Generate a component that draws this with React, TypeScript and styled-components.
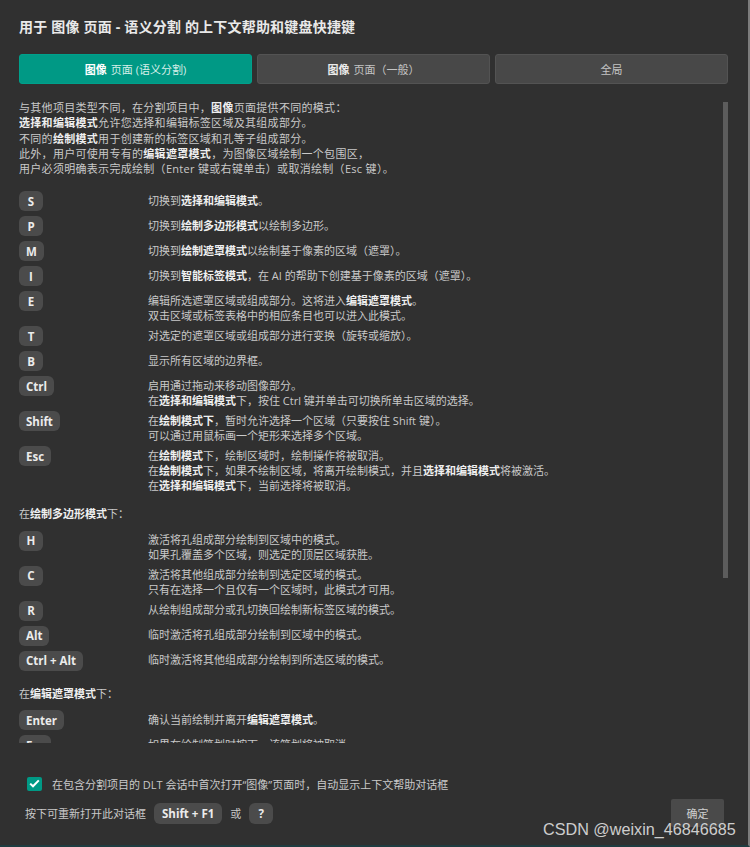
import React from "react";
import styled, { createGlobalStyle } from "styled-components";

const Global = createGlobalStyle`
  html, body { margin: 0; padding: 0; background: #303030; }
  body { font-family: "Open Sans", "Noto Sans CJK SC", sans-serif; }
`;

const Page = styled.div`
  position: relative;
  box-sizing: border-box;
  width: 750px;
  height: 847px;
  padding: 17px 20px 0 19px;
  background: #303030;
  border-right: 2px solid #7c7c7c;
  border-bottom: 2px solid #1f3c40;
  overflow: hidden;
  color: #c9c9c9;
  font-size: 11px;
`;

const Title = styled.h1`
  margin: 0;
  height: 20px;
  line-height: 20px;
  font-size: 14px;
  font-weight: 700;
  letter-spacing: 0.2px;
  color: #e9e9e9;
`;

const Tabs = styled.div`
  display: grid;
  grid-template-columns: repeat(3, 1fr);
  gap: 5px;
  margin-top: 17px;
`;

const Tab = styled.div<{ $active?: boolean }>`
  height: 30px;
  border-radius: 3px;
  display: flex;
  align-items: center;
  justify-content: center;
  font-size: 11px;
  background: ${(p) => (p.$active ? "#009985" : "#484848")};
  color: ${(p) => (p.$active ? "#d6efe9" : "#c4c4c4")};
  border: 1px solid ${(p) => (p.$active ? "#00a08b" : "#535353")};
  box-sizing: border-box;
  b { color: ${(p) => (p.$active ? "#ffffff" : "#ececec")}; margin-right: 4px; }
`;

const ScrollArea = styled.div`
  display: flex;
  margin-top: 16px;
  height: 643px;
`;

const Content = styled.div`
  flex: 1;
  overflow: hidden;
  display: flex;
  flex-direction: column;
  gap: 15px;
`;

const Track = styled.div`
  width: 5px;
  padding-top: 2px;
`;

const Thumb = styled.div`
  height: 476px;
  background: #5c5c5c;
`;

const Intro = styled.div`
  line-height: 15.25px;
  letter-spacing: 0.3px;
`;

const B = styled.b`
  font-weight: 700;
  color: #efefef;
`;

const Rows = styled.div`
  display: flex;
  flex-direction: column;
  gap: 5px;
`;

const Row = styled.div`
  display: flex;
  align-items: flex-start;
`;

const KeyCol = styled.div`
  width: 129px;
  flex: none;
`;

const Key = styled.span`
  display: inline-flex;
  align-items: center;
  justify-content: center;
  box-sizing: border-box;
  height: 20px;
  min-width: 24px;
  padding: 0 7px;
  border-radius: 6px;
  background: #4b4b4b;
  color: #ececec;
  font-family: "Open Sans", sans-serif;
  font-weight: 700;
  font-size: 11.5px;
  white-space: pre;
`;

const Desc = styled.div`
  line-height: 15px;
  padding-top: 1.5px;
  margin-bottom: -1.5px;
`;

const Section = styled.div`
  display: flex;
  flex-direction: column;
`;

const Heading = styled.div`
  line-height: 15px;
  margin-bottom: 9.5px;
`;

const CheckRow = styled.label`
  display: flex;
  align-items: center;
  gap: 10px;
  margin: 33px 0 0 8px;
  height: 15px;
`;

const Box = styled.span`
  width: 15px;
  height: 14px;
  border-radius: 2px;
  background: #009985;
  display: inline-flex;
  align-items: center;
  justify-content: center;
`;

const BottomRow = styled.div`
  display: flex;
  align-items: center;
  justify-content: space-between;
  margin: 8px 4px 0 6px;
`;

const Reopen = styled.div`
  display: flex;
  align-items: center;
  gap: 8px;
`;

const SmallKey = styled(Key)`
  height: 21px;
  padding: 0 8px;
`;

const OkButton = styled.button`
  width: 53px;
  height: 28px;
  border: none;
  border-radius: 2px;
  background: #4a4a4a;
  color: #cfcfcf;
  font-family: "Noto Sans CJK SC", sans-serif;
  font-size: 11px;
`;

const Watermark = styled.div`
  position: absolute;
  left: 543px;
  top: 820px;
  font-family: "Liberation Sans", Arial, sans-serif;
  font-size: 16.2px;
  color: rgba(235, 235, 235, 0.85);
  white-space: nowrap;
`;

type Item = { k: string; lines: React.ReactNode[] };

const main: Item[] = [
  { k: "S", lines: [<>切换到<B>选择和编辑模式</B>。</>] },
  { k: "P", lines: [<>切换到<B>绘制多边形模式</B>以绘制多边形。</>] },
  { k: "M", lines: [<>切换到<B>绘制遮罩模式</B>以绘制基于像素的区域（遮罩）。</>] },
  { k: "I", lines: [<>切换到<B>智能标签模式</B>，在 AI 的帮助下创建基于像素的区域（遮罩）。</>] },
  {
    k: "E",
    lines: [
      <>编辑所选遮罩区域或组成部分。这将进入<B>编辑遮罩模式</B>。</>,
      <>双击区域或标签表格中的相应条目也可以进入此模式。</>,
    ],
  },
  { k: "T", lines: [<>对选定的遮罩区域或组成部分进行变换（旋转或缩放）。</>] },
  { k: "B", lines: [<>显示所有区域的边界框。</>] },
  {
    k: "Ctrl",
    lines: [
      <>启用通过拖动来移动图像部分。</>,
      <>在<B>选择和编辑模式</B>下，按住 Ctrl 键并单击可切换所单击区域的选择。</>,
    ],
  },
  {
    k: "Shift",
    lines: [
      <>在<B>绘制模式下</B>，暂时允许选择一个区域（只要按住 Shift 键）。</>,
      <>可以通过用鼠标画一个矩形来选择多个区域。</>,
    ],
  },
  {
    k: "Esc",
    lines: [
      <>在<B>绘制模式</B>下，绘制区域时，绘制操作将被取消。</>,
      <>在<B>绘制模式</B>下，如果不绘制区域，将离开绘制模式，并且<B>选择和编辑模式</B>将被激活。</>,
      <>在<B>选择和编辑模式</B>下，当前选择将被取消。</>,
    ],
  },
];

const polygon: Item[] = [
  {
    k: "H",
    lines: [<>激活将孔组成部分绘制到区域中的模式。</>, <>如果孔覆盖多个区域，则选定的顶层区域获胜。</>],
  },
  {
    k: "C",
    lines: [<>激活将其他组成部分绘制到选定区域的模式。</>, <>只有在选择一个且仅有一个区域时，此模式才可用。</>],
  },
  { k: "R", lines: [<>从绘制组成部分或孔切换回绘制新标签区域的模式。</>] },
  { k: "Alt", lines: [<>临时激活将孔组成部分绘制到区域中的模式。</>] },
  { k: "Ctrl + Alt", lines: [<>临时激活将其他组成部分绘制到所选区域的模式。</>] },
];

const mask: Item[] = [
  { k: "Enter", lines: [<>确认当前绘制并离开<B>编辑遮罩模式</B>。</>] },
  { k: "Esc", lines: [<>如果在绘制笔划时按下，该笔划将被取消。</>] },
];

const KeyRows = ({ items }: { items: Item[] }) => (
  <Rows>
    {items.map((it, i) => (
      <Row key={i}>
        <KeyCol>
          <Key>{it.k}</Key>
        </KeyCol>
        <Desc>
          {it.lines.map((l, j) => (
            <div key={j}>{l}</div>
          ))}
        </Desc>
      </Row>
    ))}
  </Rows>
);

export default function App() {
  return (
    <>
      <Global />
      <Page>
        <Title>用于 图像 页面 - 语义分割 的上下文帮助和键盘快捷键</Title>
        <Tabs>
          <Tab $active>
            <b>图像</b>页面 (语义分割)
          </Tab>
          <Tab>
            <b>图像</b>页面（一般）
          </Tab>
          <Tab>全局</Tab>
        </Tabs>
        <ScrollArea>
          <Content>
            <Intro>
              <div>与其他项目类型不同，在分割项目中，<B>图像</B>页面提供不同的模式：</div>
              <div><B>选择和编辑模式</B>允许您选择和编辑标签区域及其组成部分。</div>
              <div>不同的<B>绘制模式</B>用于创建新的标签区域和孔等子组成部分。</div>
              <div>此外，用户可使用专有的<B>编辑遮罩模式</B>，为图像区域绘制一个包围区，</div>
              <div>用户必须明确表示完成绘制（Enter 键或右键单击）或取消绘制（Esc 键）。</div>
            </Intro>
            <KeyRows items={main} />
            <Section>
              <Heading>在<B>绘制多边形模式</B>下：</Heading>
              <KeyRows items={polygon} />
            </Section>
            <Section>
              <Heading>在<B>编辑遮罩模式</B>下：</Heading>
              <KeyRows items={mask} />
            </Section>
          </Content>
          <Track>
            <Thumb />
          </Track>
        </ScrollArea>
        <CheckRow>
          <Box>
            <svg width="11" height="9" viewBox="0 0 11 9">
              <polyline points="1.2,4.6 4,7.3 9.8,1.4" fill="none" stroke="#ffffff" strokeWidth="2" />
            </svg>
          </Box>
          <span>在包含分割项目的 DLT 会话中首次打开“图像”页面时，自动显示上下文帮助对话框</span>
        </CheckRow>
        <BottomRow>
          <Reopen>
            <span>按下可重新打开此对话框</span>
            <SmallKey>Shift + F1</SmallKey>
            <span>或</span>
            <SmallKey>?</SmallKey>
          </Reopen>
          <OkButton>确定</OkButton>
        </BottomRow>
        <Watermark>CSDN @weixin_46846685</Watermark>
      </Page>
    </>
  );
}
